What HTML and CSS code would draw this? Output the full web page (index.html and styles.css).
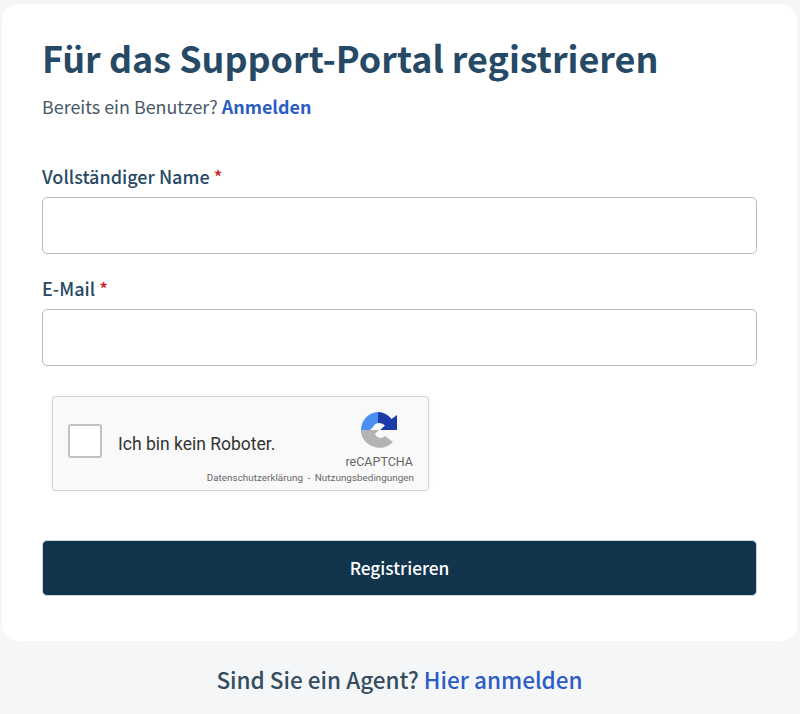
FILE: index.html
```html
<!DOCTYPE html>
<html lang="de">
<head>
    <meta charset="UTF-8">
    <meta name="viewport" content="width=device-width, initial-scale=1.0">
    <title>Für das Support-Portal registrieren</title>
    <link rel="stylesheet" href="styles.css">
</head>
<body>
    <div class="card">
        <h1>Für das Support-Portal registrieren</h1>
        <p class="sub">Bereits ein Benutzer? <a href="#">Anmelden</a></p>
        <form class="form">
            <div class="field">
                <label for="name">Vollständiger Name <span class="req">*</span></label>
                <input id="name" type="text">
            </div>
            <div class="field">
                <label for="email">E-Mail <span class="req">*</span></label>
                <input id="email" type="email">
            </div>
            <div class="captcha">
                <span class="check"></span>
                <span class="robot">Ich bin kein Roboter.</span>
                <div class="brand">
                    <svg class="logo" width="38" height="38" viewBox="0 0 38 38">
                        <path fill="#1c3aa9" d="M18 1A18 18 0 0 1 31.5 8L37 4V19H20L25 14.5A8 8 0 0 0 18 12Z"/>
                        <path fill="#4a90f0" d="M18 1A18 18 0 0 0 1 19H10L13 16A7 7 0 0 1 18 12Z"/>
                        <path fill="#b4b4b4" d="M1 19H19L15 23A6 6 0 0 0 25 25L33 31A19 19 0 0 1 1 22Z"/>
                    </svg>
                    <span class="brand-name">reCAPTCHA</span>
                </div>
                <span class="terms">Datenschutzerklärung - Nutzungsbedingungen</span>
            </div>
            <button type="button" class="submit">Registrieren</button>
        </form>
    </div>
    <p class="agent">Sind Sie ein Agent? <a href="#">Hier anmelden</a></p>
</body>
</html>
```

FILE: styles.css
```css
body {
    margin: 0;
    padding: 4px 3px 0 2px;
    background: #f5f6f8;
    font-family: "Noto Sans CJK SC", "Noto Sans", sans-serif;
    color: #264966;
}
a {
    color: #2c5cc5;
    text-decoration: none;
}
.card {
    background: #fff;
    border-radius: 16px;
    padding: 30px 40px 44px;
    height: 563px;
}
h1 {
    margin: 0;
    font-size: 35.9px;
    line-height: 46px;
    font-weight: 700;
    color: #264966;
}
.sub {
    margin: 13px 0 0;
    font-size: 17.9px;
    line-height: 26px;
    color: #475867;
}
.sub a {
    font-weight: 700;
}
.form {
    margin-top: 44px;
}
.field {
    margin-bottom: 21px;
}
label {
    display: block;
    font-size: 18px;
    line-height: 26px;
    font-weight: 500;
    margin-bottom: 8px;
}
.req {
    color: #c82124;
}
input {
    display: block;
    box-sizing: border-box;
    width: 100%;
    height: 57px;
    border: 1px solid #b3bdca;
    border-radius: 5px;
    background: #fff;
}
.captcha {
    position: relative;
    box-sizing: border-box;
    width: 377px;
    height: 95px;
    margin: 30px 0 49px 10px;
    background: #f9f9f9;
    border: 1px solid #d3d3d3;
    border-radius: 4px;
    box-shadow: 0 0 4px rgba(0, 0, 0, 0.08);
    font-family: Roboto, sans-serif;
}
.check {
    position: absolute;
    left: 15px;
    top: 27px;
    box-sizing: border-box;
    width: 34px;
    height: 34px;
    background: #fff;
    border: 2px solid #c1c1c1;
    border-radius: 3px;
}
.robot {
    position: absolute;
    left: 65px;
    top: 36px;
    font-size: 17.5px;
    line-height: 22px;
    color: #333;
}
.brand {
    position: absolute;
    right: 15px;
    top: 14px;
    display: flex;
    flex-direction: column;
    align-items: center;
}
.brand-name {
    font-size: 12.5px;
    line-height: 14px;
    margin-top: 6px;
    color: #666;
}
.terms {
    position: absolute;
    right: 14px;
    top: 75px;
    font-size: 9.8px;
    line-height: 12px;
    letter-spacing: 0.05px;
    word-spacing: 2px;
    white-space: nowrap;
    color: #666;
}
.submit {
    display: block;
    width: 100%;
    height: 56px;
    padding: 0 0 2px;
    border: 1px solid #c9d6e2;
    border-radius: 5px;
    background: #12344d;
    color: #fff;
    font-family: inherit;
    font-size: 17.3px;
    font-weight: 500;
}
.agent {
    margin: 22px 0 0;
    text-align: center;
    font-size: 22.5px;
    line-height: 32px;
    font-weight: 500;
    color: #344c5f;
}
```
